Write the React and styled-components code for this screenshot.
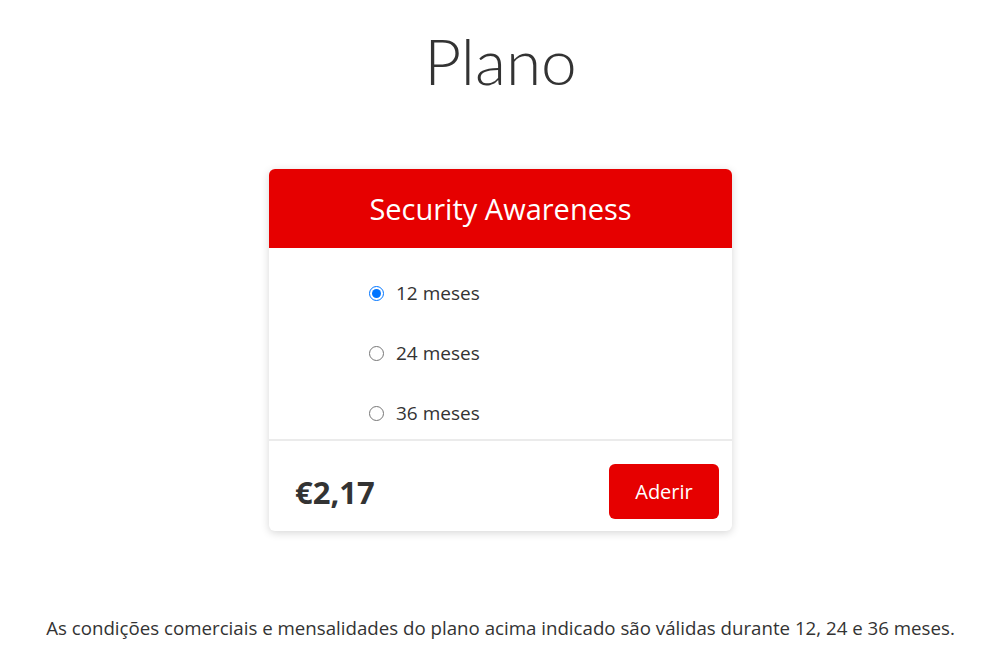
import React, { useState } from 'react'
import styled, { createGlobalStyle } from 'styled-components'

const GlobalStyle = createGlobalStyle`
  html, body {
    margin: 0;
    padding: 0;
    background: #ffffff;
    overflow: hidden;
  }
  body {
    font-family: 'Open Sans', 'Noto Sans', sans-serif;
    color: #333333;
  }
`

const Page = styled.div`
  display: flex;
  flex-direction: column;
  align-items: center;
  width: 1001px;
  height: 661px;
`

const Title = styled.h1`
  margin: 16px 0 0;
  font-family: 'Lato', 'Open Sans', sans-serif;
  font-size: 64px;
  font-weight: 300;
  line-height: 90px;
  color: #333333;
`

const Card = styled.div`
  margin-top: 63px;
  width: 463px;
  border-radius: 6px;
  background: #ffffff;
  box-shadow: 0 2px 8px rgba(0, 0, 0, 0.16);
  overflow: hidden;
`

const CardHeader = styled.div`
  height: 79px;
  display: flex;
  align-items: center;
  justify-content: center;
  background: #e60000;
  color: #ffffff;
  font-size: 29px;
  font-weight: 400;
`

const Options = styled.div`
  display: flex;
  flex-direction: column;
  gap: 40px;
  padding: 35px 0 16px 100px;
  border-bottom: 2px solid #ebebeb;
`

const Option = styled.label`
  display: flex;
  align-items: center;
  gap: 12px;
  height: 20px;
  font-size: 19px;
  color: #333333;
  cursor: pointer;
`

const Radio = styled.input`
  margin: 0;
  width: 15px;
  height: 15px;
  accent-color: #0075ff;
`

const CardFooter = styled.div`
  display: flex;
  align-items: center;
  justify-content: space-between;
  padding: 23px 13px 12px 26px;
`

const Price = styled.span`
  font-size: 31px;
  font-weight: 700;
  color: #333333;
`

const JoinButton = styled.button`
  width: 110px;
  height: 55px;
  border: none;
  border-radius: 6px;
  background: #e60000;
  color: #ffffff;
  font-family: inherit;
  font-size: 20px;
  cursor: pointer;
`

const Note = styled.p`
  margin: 84px 0 0;
  font-size: 18.7px;
  color: #333333;
  text-align: center;
`

const periods = [12, 24, 36]

export default function App() {
  const [period, setPeriod] = useState(12)

  return (
    <Page>
      <GlobalStyle />
      <Title>Plano</Title>
      <Card>
        <CardHeader>Security Awareness</CardHeader>
        <Options>
          {periods.map(p => (
            <Option key={p}>
              <Radio
                type='radio'
                name='period'
                checked={period === p}
                onChange={() => setPeriod(p)}
              />
              {p} meses
            </Option>
          ))}
        </Options>
        <CardFooter>
          <Price>€2,17</Price>
          <JoinButton>Aderir</JoinButton>
        </CardFooter>
      </Card>
      <Note>
        As condições comerciais e mensalidades do plano acima indicado são
        válidas durante 12, 24 e 36 meses.
      </Note>
    </Page>
  )
}
